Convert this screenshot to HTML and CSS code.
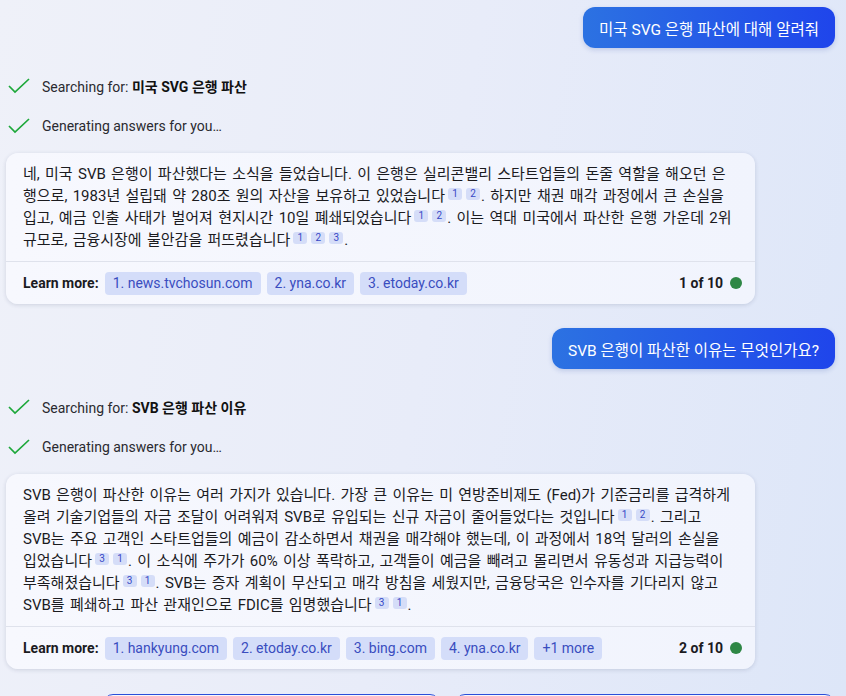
FILE: index.html
```html
<!DOCTYPE html>
<html lang="ko">
<head>
<meta charset="utf-8">
<link rel="stylesheet" href="styles.css">
</head>
<body>
<div class="chat">
  <div class="user-row"><div class="bubble">미국 SVG 은행 파산에 대해 알려줘</div></div>

  <div class="status first">
    <svg class="check" viewBox="0 0 22 16" width="22" height="16"><path d="M1 8 L7 14 L21 1" /></svg>
    <span>Searching for: <b>미국 SVG 은행 파산</b></span>
  </div>
  <div class="status">
    <svg class="check" viewBox="0 0 22 16" width="22" height="16"><path d="M1 8 L7 14 L21 1" /></svg>
    <span>Generating answers for you…</span>
  </div>

  <div class="card">
    <div class="body">네, 미국 SVB 은행이 파산했다는 소식을 들었습니다. 이 은행은 실리콘밸리 스타트업들의 돈줄 역할을 해오던 은<br>행으로, 1983년 설립돼 약 280조 원의 자산을 보유하고 있었습니다<span class="cite">1</span><span class="cite">2</span>. 하지만 채권 매각 과정에서 큰 손실을<br>입고, 예금 인출 사태가 벌어져 현지시간 10일 폐쇄되었습니다<span class="cite">1</span><span class="cite">2</span>. 이는 역대 미국에서 파산한 은행 가운데 2위<br>규모로, 금융시장에 불안감을 퍼뜨렸습니다<span class="cite">1</span><span class="cite">2</span><span class="cite">3</span>.</div>
    <div class="footer">
      <span class="learn">Learn more:</span>
      <span class="chip">1. news.tvchosun.com</span>
      <span class="chip">2. yna.co.kr</span>
      <span class="chip">3. etoday.co.kr</span>
      <span class="count">1 of 10 <i class="dot"></i></span>
    </div>
  </div>

  <div class="user-row second"><div class="bubble">SVB 은행이 파산한 이유는 무엇인가요?</div></div>

  <div class="status first">
    <svg class="check" viewBox="0 0 22 16" width="22" height="16"><path d="M1 8 L7 14 L21 1" /></svg>
    <span>Searching for: <b>SVB 은행 파산 이유</b></span>
  </div>
  <div class="status">
    <svg class="check" viewBox="0 0 22 16" width="22" height="16"><path d="M1 8 L7 14 L21 1" /></svg>
    <span>Generating answers for you…</span>
  </div>

  <div class="card">
    <div class="body">SVB 은행이 파산한 이유는 여러 가지가 있습니다. 가장 큰 이유는 미 연방준비제도 (Fed)가 기준금리를 급격하게<br>올려 기술기업들의 자금 조달이 어려워져 SVB로 유입되는 신규 자금이 줄어들었다는 것입니다<span class="cite">1</span><span class="cite">2</span>. 그리고<br>SVB는 주요 고객인 스타트업들의 예금이 감소하면서 채권을 매각해야 했는데, 이 과정에서 18억 달러의 손실을<br>입었습니다<span class="cite">3</span><span class="cite">1</span>. 이 소식에 주가가 60% 이상 폭락하고, 고객들이 예금을 빼려고 몰리면서 유동성과 지급능력이<br>부족해졌습니다<span class="cite">3</span><span class="cite">1</span>. SVB는 증자 계획이 무산되고 매각 방침을 세웠지만, 금융당국은 인수자를 기다리지 않고<br>SVB를 폐쇄하고 파산 관재인으로 FDIC를 임명했습니다<span class="cite">3</span><span class="cite">1</span>.</div>
    <div class="footer">
      <span class="learn">Learn more:</span>
      <span class="chip">1. hankyung.com</span>
      <span class="chip">2. etoday.co.kr</span>
      <span class="chip">3. bing.com</span>
      <span class="chip">4. yna.co.kr</span>
      <span class="chip">+1 more</span>
      <span class="count">2 of 10 <i class="dot"></i></span>
    </div>
  </div>

  <div class="suggest">
    <div class="pill p1"></div>
    <div class="pill p2"></div>
  </div>
</div>
</body>
</html>
```

FILE: styles.css
```css
html, body {
  margin: 0;
  height: 100%;
  overflow: hidden;
}
body {
  font-family: Roboto, "Noto Sans CJK KR", sans-serif;
  background: linear-gradient(100deg, #eff1f9 0%, #e8ecf9 50%, #dde6f8 100%);
  color: #1b1b1f;
}
.chat {
  padding: 7px 11px 0 6px;
  display: flex;
  flex-direction: column;
}
.user-row {
  display: flex;
  justify-content: flex-end;
}
.user-row.second {
  margin-top: 24px;
}
.bubble {
  height: 41px;
  display: flex;
  align-items: center;
  padding: 0 16px;
  border-radius: 12px;
  color: #fff;
  font-size: 15.5px;
  background: linear-gradient(90deg, #2c72e2 0%, #1f45eb 100%);
  box-shadow: 0 2px 5px rgba(30, 60, 160, 0.18);
}
.status {
  height: 24px;
  display: flex;
  align-items: center;
  gap: 12px;
  font-size: 14px;
  color: #2a2a30;
  margin-top: 16px;
  padding-left: 2px;
}
.status.first {
  margin-top: 26px;
}
.status b {
  font-weight: 700;
  color: #111;
}
.check {
  fill: none;
  stroke: #1ea83b;
  stroke-width: 1.7;
}
.card {
  margin-top: 15px;
  width: 749px;
  box-sizing: border-box;
  background: linear-gradient(90deg, #f7f8fe 0%, #f1f4fd 100%);
  border-radius: 12px;
  box-shadow: 0 1px 4px rgba(40, 50, 90, 0.16);
}
.body {
  padding: 10px 17px 10px 17px;
  font-size: 15px;
  line-height: 22px;
  word-spacing: 1.6px;
  white-space: nowrap;
  border-bottom: 1px solid #dfe2ec;
}
.cite {
  display: inline-block;
  width: 14px;
  height: 12px;
  line-height: 12px;
  text-align: center;
  font-size: 10px;
  color: #3748c6;
  background: #d5ddf8;
  border-radius: 3px;
  margin-left: 3px;
  margin-right: 1px;
  vertical-align: 4px;
}
.cite + .cite {
  margin-left: 3px;
}
.footer {
  height: 42px;
  display: flex;
  align-items: center;
  gap: 6px;
  padding: 0 13px 0 17px;
}
.learn {
  font-size: 14px;
  font-weight: 700;
}
.chip {
  height: 23px;
  display: flex;
  align-items: center;
  padding: 0 8px;
  border-radius: 4px;
  background: #d4ddf9;
  color: #3a4dbf;
  font-size: 14px;
}
.count {
  margin-left: auto;
  display: flex;
  align-items: center;
  gap: 7px;
  font-size: 14px;
  font-weight: 700;
}
.dot {
  width: 12px;
  height: 12px;
  border-radius: 50%;
  background: #2e8745;
}
.suggest {
  margin-top: 25px;
  display: flex;
  gap: 15px;
  padding-left: 97px;
}
.pill {
  height: 40px;
  border: 1.5px solid #2b4fd9;
  border-radius: 10px;
  background: #f5f7fd;
}
.p1 { width: 335px; }
.p2 { width: 378px; }
```
